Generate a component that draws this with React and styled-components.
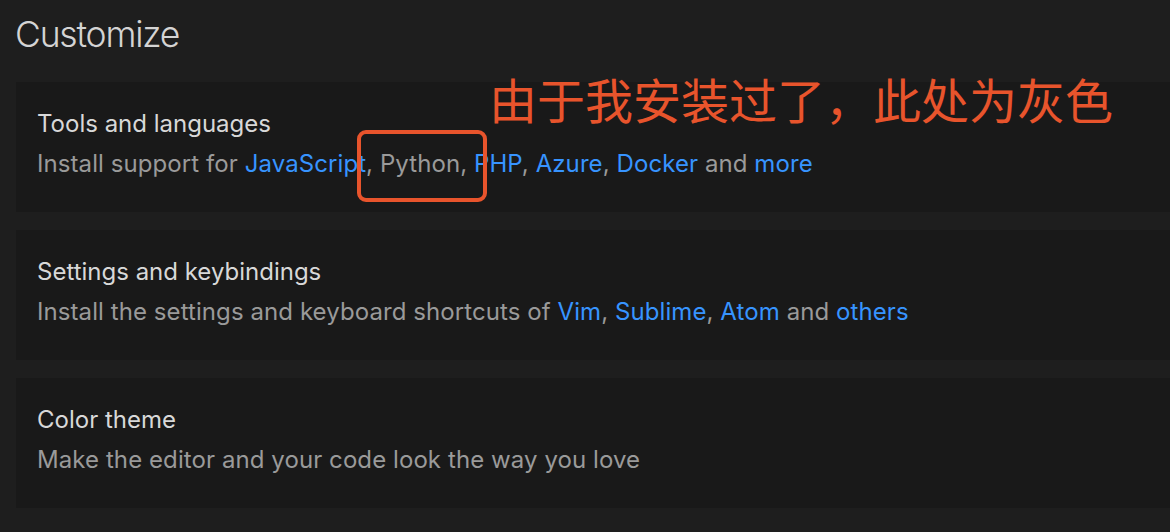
import React from "react";
import styled, { createGlobalStyle } from "styled-components";

const Global = createGlobalStyle`
  html, body { margin: 0; padding: 0; background: #1e1e1e; }
  body { font-family: Inter, "Noto Sans", sans-serif; -webkit-font-smoothing: antialiased; }
`;

const Page = styled.div`
  position: relative;
  min-height: 532px;
  background: #1e1e1e;
  padding: 12px 0 0 16px;
  box-sizing: border-box;
  overflow: hidden;
`;

const Heading = styled.h1`
  margin: 0 0 24px -1px;
  font-size: 35.5px;
  line-height: 46px;
  font-weight: 300;
  color: #d4d4d4;
  letter-spacing: -1.2px;
`;

const List = styled.div`
  display: flex;
  flex-direction: column;
  gap: 18px;
`;

const Card = styled.div`
  background: #191919;
  padding: 27px 21px 33px;
  height: 130px;
  box-sizing: border-box;
`;

const Title = styled.div`
  font-size: 24px;
  line-height: 30px;
  color: #d8d8d8;
  letter-spacing: 0;
`;

const Desc = styled.div`
  margin-top: 10px;
  font-size: 24px;
  line-height: 30px;
  color: #9a9a9a;
  letter-spacing: 0.08px;
  white-space: nowrap;
`;

const Link = styled.a`
  color: #3794ff;
  text-decoration: none;
`;

const Note = styled.div`
  position: absolute;
  left: 489px;
  top: 74px;
  font-family: "Noto Sans CJK SC", sans-serif;
  font-size: 48px;
  line-height: 48px;
  color: #e8542c;
  white-space: nowrap;
`;

const Marker = styled.div`
  position: absolute;
  left: 357px;
  top: 130px;
  width: 130px;
  height: 72px;
  box-sizing: border-box;
  border: 4px solid #e8542c;
  border-radius: 9px;
`;

const items = [
  {
    title: "Tools and languages",
    parts: [
      "Install support for ",
      { link: "JavaScript" },
      ", Python, ",
      { link: "PHP" },
      ", ",
      { link: "Azure" },
      ", ",
      { link: "Docker" },
      " and ",
      { link: "more" },
    ],
  },
  {
    title: "Settings and keybindings",
    parts: [
      "Install the settings and keyboard shortcuts of ",
      { link: "Vim" },
      ", ",
      { link: "Sublime" },
      ", ",
      { link: "Atom" },
      " and ",
      { link: "others" },
    ],
  },
  {
    title: "Color theme",
    parts: ["Make the editor and your code look the way you love"],
  },
];

export default function App() {
  return (
    <>
      <Global />
      <Page>
        <Heading>Customize</Heading>
        <List>
          {items.map((it) => (
            <Card key={it.title}>
              <Title>{it.title}</Title>
              <Desc>
                {it.parts.map((p, i) =>
                  typeof p === "string" ? (
                    <React.Fragment key={i}>{p}</React.Fragment>
                  ) : (
                    <Link key={i}>{p.link}</Link>
                  )
                )}
              </Desc>
            </Card>
          ))}
        </List>
        <Note>由于我安装过了，此处为灰色</Note>
        <Marker />
      </Page>
    </>
  );
}
